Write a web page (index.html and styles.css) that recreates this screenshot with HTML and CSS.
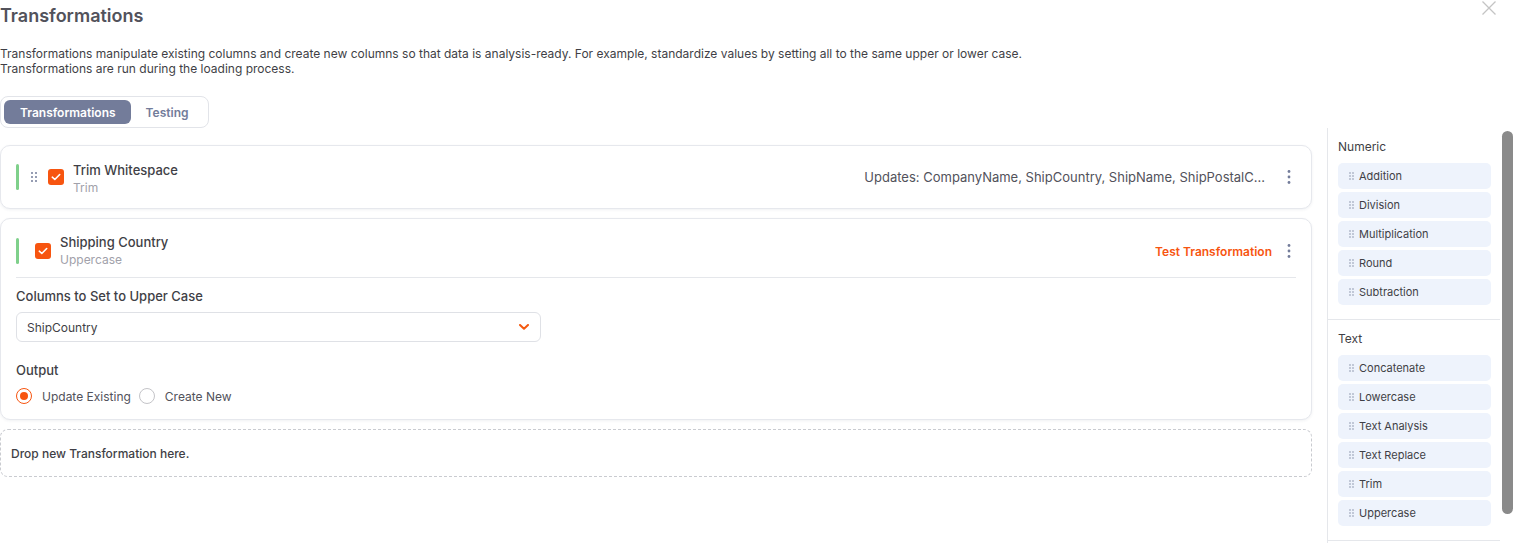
FILE: index.html
```html
<!DOCTYPE html>
<html lang="en">
<head>
  <meta charset="UTF-8">
  <title>Transformations</title>
  <link rel="stylesheet" href="styles.css">
</head>
<body>
  <div class="header">
    <h1>Transformations</h1>
    <button class="close" aria-label="Close">
      <svg width="16" height="16" viewBox="0 0 16 16"><path d="M1.5 1.5 L14.5 14.5 M14.5 1.5 L1.5 14.5" stroke="#c4c4c4" stroke-width="1.3" fill="none"/></svg>
    </button>
  </div>
  <p class="intro">
    Transformations manipulate existing columns and create new columns so that data is analysis-ready. For example, standardize values by setting all to the same upper or lower case.<br>
    Transformations are run during the loading process.
  </p>

  <div class="tabs">
    <button class="tab active">Transformations</button>
    <button class="tab">Testing</button>
  </div>

  <div class="workspace">
    <div class="steps">
      <!-- card cerrada -->
      <div class="card">
        <div class="card-head">
          <span class="bar"></span>
          <svg class="grip" width="6" height="10" viewBox="0 0 6 10"><circle cx="1" cy="1" r="1"/><circle cx="5" cy="1" r="1"/><circle cx="1" cy="5" r="1"/><circle cx="5" cy="5" r="1"/><circle cx="1" cy="9" r="1"/><circle cx="5" cy="9" r="1"/></svg>
          <span class="check"><svg width="10" height="8" viewBox="0 0 10 8"><path d="M1.3 4.2 L3.8 6.5 L8.7 1.5" stroke="#fff" stroke-width="1.6" fill="none" stroke-linecap="round" stroke-linejoin="round"/></svg></span>
          <div class="names">
            <div class="name">Trim Whitespace</div>
            <div class="kind">Trim</div>
          </div>
          <div class="updates">Updates: CompanyName, ShipCountry, ShipName, ShipPostalC...</div>
          <button class="kebab"><svg width="4" height="14" viewBox="0 0 4 14"><circle cx="2" cy="1.5" r="1.4"/><circle cx="2" cy="7" r="1.4"/><circle cx="2" cy="12.5" r="1.4"/></svg></button>
        </div>
      </div>

      <!-- card abierta -->
      <div class="card open">
        <div class="card-head">
          <span class="bar"></span>
          <span class="check"><svg width="10" height="8" viewBox="0 0 10 8"><path d="M1.3 4.2 L3.8 6.5 L8.7 1.5" stroke="#fff" stroke-width="1.6" fill="none" stroke-linecap="round" stroke-linejoin="round"/></svg></span>
          <div class="names">
            <div class="name">Shipping Country</div>
            <div class="kind">Uppercase</div>
          </div>
          <button class="test-link">Test Transformation</button>
          <button class="kebab"><svg width="4" height="14" viewBox="0 0 4 14"><circle cx="2" cy="1.5" r="1.4"/><circle cx="2" cy="7" r="1.4"/><circle cx="2" cy="12.5" r="1.4"/></svg></button>
        </div>
        <div class="card-body">
          <div class="field-label">Columns to Set to Upper Case</div>
          <div class="select">
            <span>ShipCountry</span>
            <svg width="10" height="6" viewBox="0 0 10 6"><path d="M1 1 L5 4.8 L9 1" stroke="#f4590f" stroke-width="2" fill="none" stroke-linecap="round" stroke-linejoin="round"/></svg>
          </div>
          <div class="field-label output">Output</div>
          <div class="radios">
            <label class="radio"><span class="dot on"></span>Update Existing</label>
            <label class="radio"><span class="dot"></span>Create New</label>
          </div>
        </div>
      </div>

      <div class="dropzone">Drop new Transformation here.</div>
    </div>

    <aside class="palette">
      <div class="groups">
        <div class="group">
          <div class="group-title">Numeric</div>
          <div class="item"><svg width="5" height="8" viewBox="0 0 5 8"><circle cx="1" cy="1" r="0.8"/><circle cx="4" cy="1" r="0.8"/><circle cx="1" cy="4" r="0.8"/><circle cx="4" cy="4" r="0.8"/><circle cx="1" cy="7" r="0.8"/><circle cx="4" cy="7" r="0.8"/></svg>Addition</div>
          <div class="item"><svg width="5" height="8" viewBox="0 0 5 8"><circle cx="1" cy="1" r="0.8"/><circle cx="4" cy="1" r="0.8"/><circle cx="1" cy="4" r="0.8"/><circle cx="4" cy="4" r="0.8"/><circle cx="1" cy="7" r="0.8"/><circle cx="4" cy="7" r="0.8"/></svg>Division</div>
          <div class="item"><svg width="5" height="8" viewBox="0 0 5 8"><circle cx="1" cy="1" r="0.8"/><circle cx="4" cy="1" r="0.8"/><circle cx="1" cy="4" r="0.8"/><circle cx="4" cy="4" r="0.8"/><circle cx="1" cy="7" r="0.8"/><circle cx="4" cy="7" r="0.8"/></svg>Multiplication</div>
          <div class="item"><svg width="5" height="8" viewBox="0 0 5 8"><circle cx="1" cy="1" r="0.8"/><circle cx="4" cy="1" r="0.8"/><circle cx="1" cy="4" r="0.8"/><circle cx="4" cy="4" r="0.8"/><circle cx="1" cy="7" r="0.8"/><circle cx="4" cy="7" r="0.8"/></svg>Round</div>
          <div class="item"><svg width="5" height="8" viewBox="0 0 5 8"><circle cx="1" cy="1" r="0.8"/><circle cx="4" cy="1" r="0.8"/><circle cx="1" cy="4" r="0.8"/><circle cx="4" cy="4" r="0.8"/><circle cx="1" cy="7" r="0.8"/><circle cx="4" cy="7" r="0.8"/></svg>Subtraction</div>
        </div>
        <div class="group">
          <div class="group-title">Text</div>
          <div class="item"><svg width="5" height="8" viewBox="0 0 5 8"><circle cx="1" cy="1" r="0.8"/><circle cx="4" cy="1" r="0.8"/><circle cx="1" cy="4" r="0.8"/><circle cx="4" cy="4" r="0.8"/><circle cx="1" cy="7" r="0.8"/><circle cx="4" cy="7" r="0.8"/></svg>Concatenate</div>
          <div class="item"><svg width="5" height="8" viewBox="0 0 5 8"><circle cx="1" cy="1" r="0.8"/><circle cx="4" cy="1" r="0.8"/><circle cx="1" cy="4" r="0.8"/><circle cx="4" cy="4" r="0.8"/><circle cx="1" cy="7" r="0.8"/><circle cx="4" cy="7" r="0.8"/></svg>Lowercase</div>
          <div class="item"><svg width="5" height="8" viewBox="0 0 5 8"><circle cx="1" cy="1" r="0.8"/><circle cx="4" cy="1" r="0.8"/><circle cx="1" cy="4" r="0.8"/><circle cx="4" cy="4" r="0.8"/><circle cx="1" cy="7" r="0.8"/><circle cx="4" cy="7" r="0.8"/></svg>Text Analysis</div>
          <div class="item"><svg width="5" height="8" viewBox="0 0 5 8"><circle cx="1" cy="1" r="0.8"/><circle cx="4" cy="1" r="0.8"/><circle cx="1" cy="4" r="0.8"/><circle cx="4" cy="4" r="0.8"/><circle cx="1" cy="7" r="0.8"/><circle cx="4" cy="7" r="0.8"/></svg>Text Replace</div>
          <div class="item"><svg width="5" height="8" viewBox="0 0 5 8"><circle cx="1" cy="1" r="0.8"/><circle cx="4" cy="1" r="0.8"/><circle cx="1" cy="4" r="0.8"/><circle cx="4" cy="4" r="0.8"/><circle cx="1" cy="7" r="0.8"/><circle cx="4" cy="7" r="0.8"/></svg>Trim</div>
          <div class="item"><svg width="5" height="8" viewBox="0 0 5 8"><circle cx="1" cy="1" r="0.8"/><circle cx="4" cy="1" r="0.8"/><circle cx="1" cy="4" r="0.8"/><circle cx="4" cy="4" r="0.8"/><circle cx="1" cy="7" r="0.8"/><circle cx="4" cy="7" r="0.8"/></svg>Uppercase</div>
        </div>
      </div>
      <div class="scroll-track"><div class="scroll-thumb"></div></div>
    </aside>
  </div>
</body>
</html>
```

FILE: styles.css
```css
body {
  margin: 0;
  font-family: Inter, "Noto Sans", Arial, sans-serif;
  color: #3f3f46;
  background: #fff;
  overflow: hidden;
}
button {
  font-family: inherit;
  border: none;
  background: none;
  padding: 0;
  cursor: pointer;
}
.header {
  display: flex;
  justify-content: space-between;
  align-items: flex-start;
}
h1 {
  margin: 0;
  font-size: 18px;
  line-height: 32px;
  font-weight: 600;
  color: #52525b;
}
.close {
  margin: 0 16px 0 0;
  width: 16px;
  height: 16px;
}
.intro {
  margin: 14px 0 0;
  font-size: 12px;
  line-height: 15px;
  color: #3f3f46;
}
.tabs {
  display: flex;
  width: fit-content;
  margin-top: 20px;
  padding: 3px;
  border: 1px solid #e2e4e9;
  border-radius: 8px;
}
.tab {
  height: 24px;
  padding: 0 16px 0 15px;
  border-radius: 6px;
  font-size: 12px;
  font-weight: 600;
  color: #737c9a;
}
.tab.active {
  padding: 0 15px 0 16px;
  background: #737c9a;
  color: #fff;
}
.workspace {
  display: flex;
  height: 415px;
}
.steps {
  width: 1312px;
  padding-top: 17px;
  display: flex;
  flex-direction: column;
  gap: 9px;
}
.card {
  border: 1px solid #e6e8ed;
  border-radius: 10px;
  background: #fff;
  box-shadow: 0 1px 3px rgba(40, 50, 90, 0.07);
  padding: 0 15px;
}
.card-head {
  display: flex;
  align-items: center;
  height: 62px;
}
.card-head .names {
  margin-top: 4px;
}
.open .card-head {
  height: auto;
  padding: 16px 0 10px;
  border-bottom: 1px solid #e5e7eb;
}
.open .card-head .names {
  margin-top: 0;
}
.bar {
  width: 3px;
  height: 26px;
  border-radius: 2px;
  background: #7fd08b;
}
.grip {
  fill: #737c9a;
  margin-left: 12px;
}
.check {
  width: 16px;
  height: 16px;
  border-radius: 3px;
  background: #f75510;
  display: flex;
  align-items: center;
  justify-content: center;
  margin-left: 11px;
}
.open .check {
  margin-left: 16px;
}
.names {
  margin-left: 9px;
  flex: 1;
}
.name {
  font-size: 13px;
  line-height: 15px;
  font-weight: 500;
  color: #3f3f46;
}
.kind {
  font-size: 12px;
  line-height: 15px;
  color: #a1a1aa;
  margin-top: 2px;
}
.updates {
  font-size: 13px;
  color: #52525b;
  margin-right: 17px;
}
.test-link {
  font-size: 12px;
  font-weight: 600;
  color: #f75510;
  margin-right: 10px;
}
.kebab {
  width: 14px;
  height: 16px;
  display: flex;
  align-items: center;
  justify-content: center;
  fill: #737c9a;
}
.card-body {
  padding: 10px 0 15px;
}
.field-label {
  font-size: 13px;
  line-height: 16px;
  font-weight: 500;
  color: #3f3f46;
}
.field-label.output {
  margin-top: 20px;
}
.select {
  margin-top: 8px;
  height: 28px;
  border: 1px solid #dfe1e6;
  border-radius: 6px;
  display: flex;
  align-items: center;
  justify-content: space-between;
  padding: 0 11px 0 10px;
  width: 502px;
  font-size: 12px;
  color: #3f3f46;
}
.radios {
  display: flex;
  margin-top: 10px;
  gap: 8px;
}
.radio {
  display: flex;
  align-items: center;
  gap: 10px;
  font-size: 12px;
  color: #52525b;
}
.dot {
  width: 14px;
  height: 14px;
  border-radius: 50%;
  border: 1px solid #c4c4c8;
  display: flex;
  align-items: center;
  justify-content: center;
}
.dot.on {
  border-color: #f75510;
}
.dot.on::after {
  content: "";
  width: 8px;
  height: 8px;
  border-radius: 50%;
  background: #f75510;
}
.dropzone {
  height: 46px;
  border: 1px dashed #c9cbd0;
  border-radius: 8px;
  display: flex;
  align-items: center;
  padding-left: 10px;
  font-size: 12px;
  font-weight: 500;
  color: #3f3f46;
}
.palette {
  margin-left: 15px;
  border-left: 1px solid #e5e7eb;
  flex: 1;
  display: flex;
}
.groups {
  flex: 1;
}
.group {
  padding: 11px 9px 14px 10px;
  border-bottom: 1px solid #e5e7eb;
  display: flex;
  flex-direction: column;
  gap: 3px;
}
.group-title {
  font-size: 12px;
  line-height: 16px;
  color: #3f3f46;
  margin-bottom: 5px;
}
.item {
  height: 26px;
  border-radius: 5px;
  background: #eef3fc;
  display: flex;
  align-items: center;
  padding-left: 11px;
  gap: 5px;
  font-size: 11px;
  color: #3f3f46;
}
.item svg {
  fill: #8a91a8;
}
.scroll-track {
  width: 13px;
  padding: 3px 0 0 2px;
  box-sizing: border-box;
}
.scroll-thumb {
  width: 11px;
  height: 383px;
  border-radius: 6px;
  background: #8a8a8a;
}
```
